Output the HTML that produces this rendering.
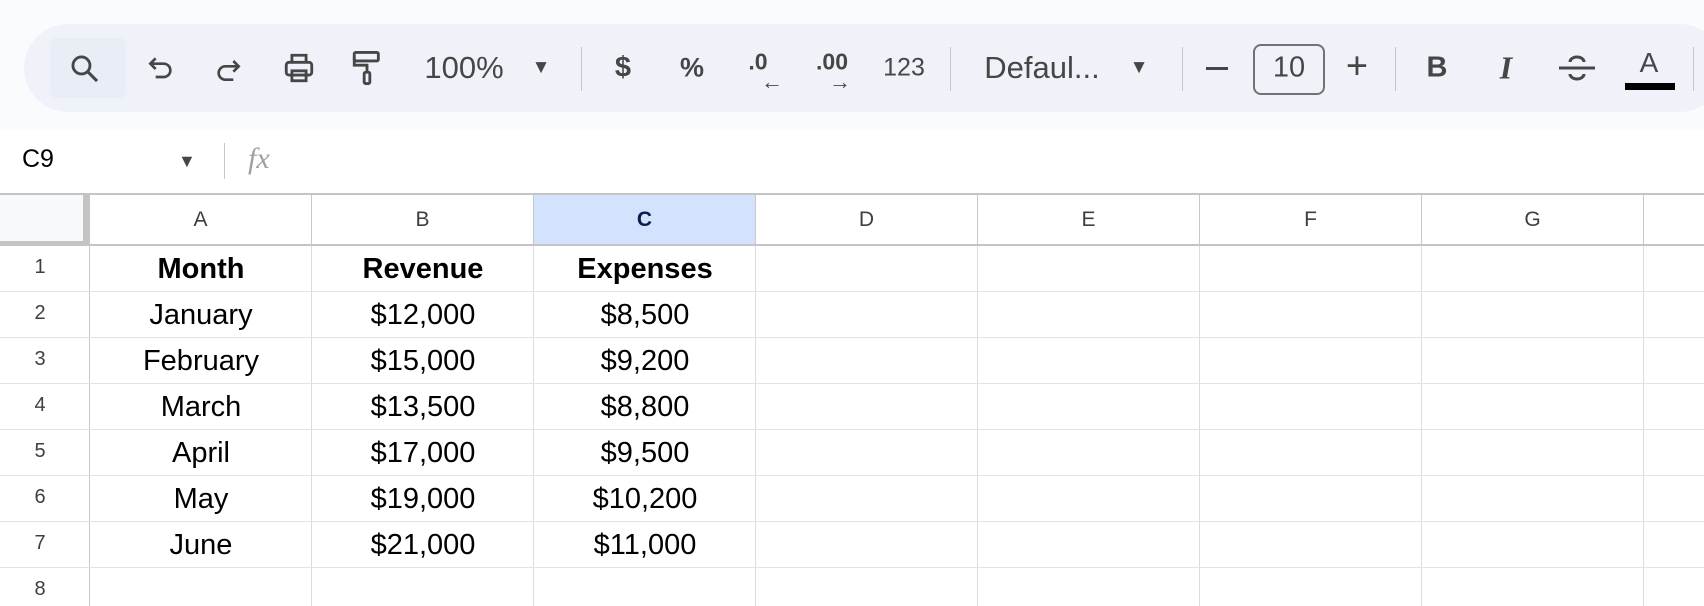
<!DOCTYPE html>
<html><head><meta charset="utf-8"><style>
*{margin:0;padding:0;box-sizing:border-box}
body{width:1704px;height:600px;overflow:hidden;background:#fff;font-family:"Liberation Sans",Arial,sans-serif;position:relative;color:#000}
.a{position:absolute}
.tb{left:0;top:0;width:1704px;height:130px;background:#f9fbfd}
.pill{left:24px;top:24px;width:1700px;height:88px;background:#eff3f9;border-radius:44px}
.ic{position:absolute;color:#444746;font-size:31px;transform:translate(-50%,-50%);top:68px;white-space:nowrap}
.sep{position:absolute;top:47px;width:1px;height:44px;background:#c4c7c5}
svg{position:absolute}
.col{position:absolute;top:193px;height:53px;border-right:1px solid #c8c8c8;border-top:2px solid #c4c4c4;border-bottom:2px solid #c4c4c4;font-size:21px;color:#3c4043;text-align:center;line-height:50px}
.vl{position:absolute;top:246px;width:1px;height:360px;background:#dadce0}
.hl{position:absolute;left:0;width:1704px;height:1px;background:#e2e3e3}
.rn{position:absolute;left:0;width:80px;text-align:center;font-size:20px;color:#3c4043}
.c{position:absolute;width:222px;text-align:center;font-size:29px;color:#000}
</style></head><body>
<div class="a tb"></div>
<div class="a pill"></div>
<div class="a" style="left:50px;top:38px;width:76px;height:60px;background:#e9eef6;border-radius:6px"></div>
<svg style="left:68px;top:52px" width="34" height="34" viewBox="0 0 24 24"><circle cx="9.5" cy="9.5" r="6" fill="none" stroke="#444746" stroke-width="2"/><path d="M14 14l6.5 6.5" stroke="#444746" stroke-width="2.2"/></svg>
<svg style="left:145px;top:53px" width="32" height="32" viewBox="0 0 24 24" fill="none" stroke="#444746" stroke-width="2"><path d="M8 4L4 8l4 4"/><path d="M4 8h10a5 5 0 0 1 0 10H8"/></svg>
<svg style="left:212px;top:53px" width="32" height="32" viewBox="0 0 24 24" fill="none" stroke="#444746" stroke-width="2"><path d="M16 6l4 4-4 4"/><path d="M20 10H10a5 5 0 0 0 0 10h6"/></svg>
<svg style="left:282px;top:51px" width="34" height="34" viewBox="0 0 24 24" fill="none" stroke="#444746" stroke-width="2"><path d="M7 8V3h10v5"/><rect x="3" y="8" width="18" height="9" rx="2"/><rect x="7" y="14" width="10" height="7"/></svg>
<svg style="left:350px;top:49px" width="34" height="38" viewBox="0 0 24 26" fill="none" stroke="#444746" stroke-width="2"><rect x="3" y="2" width="17" height="6" rx="1"/><path d="M3 5v6h9v5"/><rect x="10" y="16" width="4" height="8" rx="1"/></svg>
<div class="ic" style="left:464px">100%</div>
<div class="ic" style="left:541px;font-size:19px">▼</div>
<div class="sep" style="left:581px"></div>
<div class="ic" style="left:623px;font-size:29px;font-weight:bold">$</div>
<div class="ic" style="left:692px;font-size:27px;font-weight:bold">%</div>
<div class="ic" style="left:758px;top:62px;font-size:23px;font-weight:bold">.0</div>
<div class="ic" style="left:772px;top:82px;font-size:22px;font-weight:bold">←</div>
<div class="ic" style="left:832px;top:62px;font-size:23px;font-weight:bold">.00</div>
<div class="ic" style="left:840px;top:82px;font-size:22px;font-weight:bold">→</div>
<div class="ic" style="left:904px;font-size:25px">123</div>
<div class="sep" style="left:950px"></div>
<div class="ic" style="left:1042px">Defaul...</div>
<div class="ic" style="left:1139px;font-size:19px">▼</div>
<div class="sep" style="left:1182px"></div>
<div class="a" style="left:1206px;top:67px;width:22px;height:3px;background:#444746"></div>
<div class="a" style="left:1253px;top:44px;width:72px;height:51px;border:2px solid #6f7371;border-radius:8px"></div>
<div class="ic" style="left:1289px;font-size:29px">10</div>
<div class="ic" style="left:1357px;font-size:38px;top:67px">+</div>
<div class="sep" style="left:1395px"></div>
<div class="ic" style="left:1437px;font-weight:bold;font-size:29px">B</div>
<div class="ic" style="left:1506px;font-style:italic;font-weight:bold;font-size:32px;font-family:'Liberation Serif',serif">I</div>
<svg style="left:1559px;top:52px" width="36" height="32" viewBox="0 0 36 32" fill="none" stroke="#444746" stroke-width="3"><path d="M0 16h36"/><path d="M11 10a7 5 0 0 1 14 0"/><path d="M11 22a7 5 0 0 0 14 0"/></svg>
<div class="ic" style="left:1649px;top:63px;font-size:28px">A</div>
<div class="a" style="left:1625px;top:83px;width:50px;height:7px;background:#000"></div>
<div class="sep" style="left:1693px"></div>
<div class="a" style="left:22px;top:145px;font-size:25px;color:#000">C9</div>
<div class="a" style="left:178px;top:151px;font-size:18px;color:#444746">▼</div>
<div class="a" style="left:224px;top:143px;width:1px;height:36px;background:#c4c7c5"></div>
<div class="a" style="left:248px;top:142px;font-size:30px;font-style:italic;color:#a0a0a0;font-family:'Liberation Serif',serif">fx</div>
<div class="a" style="left:0;top:193px;width:90px;height:53px;background:#f8f9fa;border-top:2px solid #c4c4c4;border-right:7px solid #c4c4c4;border-bottom:5px solid #c4c4c4"></div>
<div class="col" style="left:90px;width:222px">A</div>
<div class="col" style="left:312px;width:222px">B</div>
<div class="col" style="left:534px;width:222px;background:#d3e3fd;color:#0b1d4f;font-weight:bold">C</div>
<div class="col" style="left:756px;width:222px">D</div>
<div class="col" style="left:978px;width:222px">E</div>
<div class="col" style="left:1200px;width:222px">F</div>
<div class="col" style="left:1422px;width:222px">G</div>
<div class="col" style="left:1644px;width:80px"></div>
<div class="vl" style="left:89px;background:#c8c8c8"></div>
<div class="vl" style="left:311px"></div><div class="vl" style="left:533px"></div><div class="vl" style="left:755px"></div><div class="vl" style="left:977px"></div><div class="vl" style="left:1199px"></div><div class="vl" style="left:1421px"></div><div class="vl" style="left:1643px"></div>
<div class="hl" style="top:291px"></div><div class="hl" style="top:337px"></div><div class="hl" style="top:383px"></div><div class="hl" style="top:429px"></div><div class="hl" style="top:475px"></div><div class="hl" style="top:521px"></div><div class="hl" style="top:567px"></div>
<div class="rn" style="top:256px">1</div><div class="rn" style="top:302px">2</div><div class="rn" style="top:348px">3</div><div class="rn" style="top:394px">4</div><div class="rn" style="top:440px">5</div><div class="rn" style="top:486px">6</div><div class="rn" style="top:532px">7</div><div class="rn" style="top:578px">8</div>
<div class="c" style="left:90px;top:253px;font-weight:bold">Month</div>
<div class="c" style="left:312px;top:253px;font-weight:bold">Revenue</div>
<div class="c" style="left:534px;top:253px;font-weight:bold">Expenses</div>
<div class="c" style="left:90px;top:299px">January</div><div class="c" style="left:312px;top:299px">$12,000</div><div class="c" style="left:534px;top:299px">$8,500</div>
<div class="c" style="left:90px;top:345px">February</div><div class="c" style="left:312px;top:345px">$15,000</div><div class="c" style="left:534px;top:345px">$9,200</div>
<div class="c" style="left:90px;top:391px">March</div><div class="c" style="left:312px;top:391px">$13,500</div><div class="c" style="left:534px;top:391px">$8,800</div>
<div class="c" style="left:90px;top:437px">April</div><div class="c" style="left:312px;top:437px">$17,000</div><div class="c" style="left:534px;top:437px">$9,500</div>
<div class="c" style="left:90px;top:483px">May</div><div class="c" style="left:312px;top:483px">$19,000</div><div class="c" style="left:534px;top:483px">$10,200</div>
<div class="c" style="left:90px;top:529px">June</div><div class="c" style="left:312px;top:529px">$21,000</div><div class="c" style="left:534px;top:529px">$11,000</div>
</body></html>
